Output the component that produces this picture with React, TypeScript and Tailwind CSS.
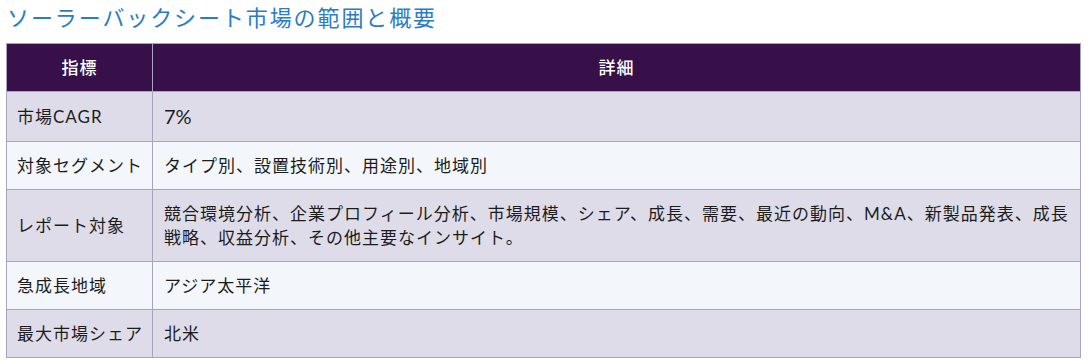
import React from 'react';

type Row = { label: string; detail: string; big?: boolean };

const rows: Row[] = [
  { label: '市場CAGR', detail: '7%', big: true },
  { label: '対象セグメント', detail: 'タイプ別、設置技術別、用途別、地域別' },
  {
    label: 'レポート対象',
    detail:
      '競合環境分析、企業プロフィール分析、市場規模、シェア、成長、需要、最近の動向、M&A、新製品発表、成長戦略、収益分析、その他主要なインサイト。',
  },
  { label: '急成長地域', detail: 'アジア太平洋' },
  { label: '最大市場シェア', detail: '北米' },
];

export default function App() {
  return (
    <div className="w-[1090px] h-[364px] bg-white font-['Lato','Noto_Sans_CJK_JP',sans-serif] text-[#1c1c1c]">
      <h2 className="pl-[7px] h-[43px] pt-[3px] text-[22px] leading-[30px] tracking-[1.9px] text-[#2b7cc4] font-normal">
        ソーラーバックシート市場の範囲と概要
      </h2>
      <table className="ml-[6px] w-[1075px] border-collapse text-[17px] leading-[24px] tracking-[1px]">
        <thead>
          <tr className="bg-[#37104a] text-white">
            <th className="w-[146px] h-[48px] border border-[#a9a3c0] font-medium text-center">指標</th>
            <th className="h-[48px] border border-[#a9a3c0] font-medium text-center">詳細</th>
          </tr>
        </thead>
        <tbody>
          {rows.map((r, i) => (
            <tr key={i} className={i % 2 === 0 ? 'bg-[#dfdcea]' : 'bg-[#f3f7fb]'}>
              <td className="border border-[#a9a3c0] pl-[10px] pr-1 pt-3 pb-[11px] align-middle whitespace-nowrap">
                {r.label}
              </td>
              <td className="border border-[#a9a3c0] pl-[11px] pr-[10px] pt-3 pb-[11px] align-middle">
                {r.big ? <span className="text-[20px] tracking-normal">{r.detail}</span> : r.detail}
              </td>
            </tr>
          ))}
        </tbody>
      </table>
    </div>
  );
}
